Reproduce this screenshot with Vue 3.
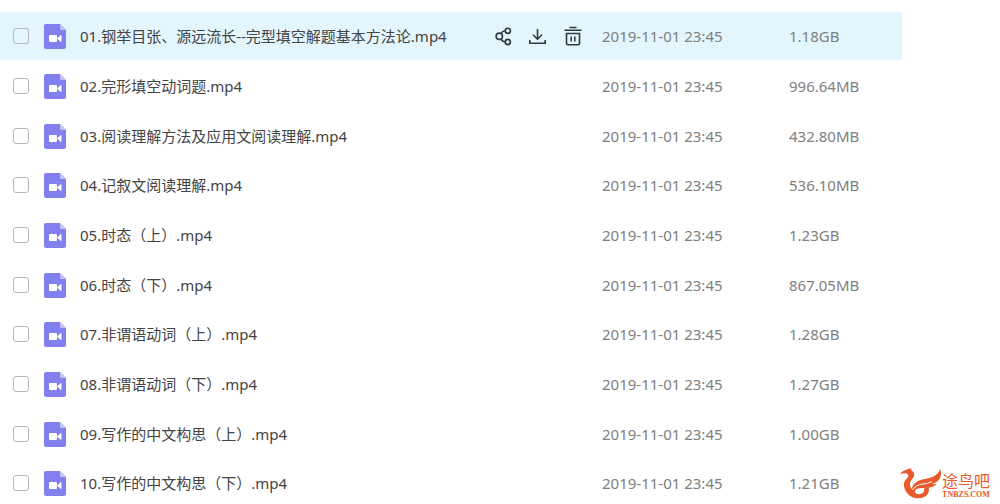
<script setup>
import { ref } from 'vue'

const date = '2019-11-01 23:45'
const files = ref([
  { name: '01.钢举目张、源远流长--完型填空解题基本方法论.mp4', size: '1.18GB', active: true },
  { name: '02.完形填空动词题.mp4', size: '996.64MB' },
  { name: '03.阅读理解方法及应用文阅读理解.mp4', size: '432.80MB' },
  { name: '04.记叙文阅读理解.mp4', size: '536.10MB' },
  { name: '05.时态（上）.mp4', size: '1.23GB' },
  { name: '06.时态（下）.mp4', size: '867.05MB' },
  { name: '07.非谓语动词（上）.mp4', size: '1.28GB' },
  { name: '08.非谓语动词（下）.mp4', size: '1.27GB' },
  { name: '09.写作的中文构思（上）.mp4', size: '1.00GB' },
  { name: '10.写作的中文构思（下）.mp4', size: '1.21GB' }
].map((f) => ({ ...f, date, checked: false })))
</script>

<template>
  <main class="page">
    <table class="files">
      <colgroup>
        <col class="c-check" />
        <col class="c-icon" />
        <col />
        <col class="c-actions" />
        <col class="c-date" />
        <col class="c-size" />
      </colgroup>
      <tbody>
        <tr v-for="(f, i) in files" :key="f.name" :class="{ active: f.active }">
          <td class="check"><input :id="'file' + i" v-model="f.checked" type="checkbox" /></td>
          <td>
            <svg class="file-icon" width="22" height="25" viewBox="0 0 22 25" aria-hidden="true">
              <path d="M2 0H16L22 6V23Q22 25 20 25H2Q0 25 0 23V2Q0 0 2 0Z" fill="#8180ee" />
              <path d="M16 0L22 6H17.500Q16 6 16 4.500Z" fill="#c5c4fa" />
              <rect x="5" y="11" width="8" height="7" rx="1" fill="#fff" />
              <path d="M13.500 14.500L17 11.500V17.500Z" fill="#fff" stroke="#fff" stroke-linejoin="round" />
            </svg>
          </td>
          <td class="name"><label :for="'file' + i">{{ f.name }}</label></td>
          <td>
            <div v-if="f.active" class="actions">
              <button type="button" aria-label="分享">
                <svg width="18" height="20" viewBox="0 0 18 20">
                  <circle cx="5.300" cy="10.300" r="3.200" />
                  <circle cx="13.800" cy="4.800" r="2.600" />
                  <circle cx="13.800" cy="16" r="2.600" />
                  <path d="M7 7.400Q8.800 4.800 11.200 4.800M7 13.200Q8.800 16 11.200 16" />
                </svg>
              </button>
              <button type="button" aria-label="下载">
                <svg width="18" height="20" viewBox="0 0 18 20">
                  <path d="M8.500 3V13M4 8.800L8.500 13.200L13 8.800M.8 14V17.200H16.200V14" />
                </svg>
              </button>
              <button type="button" aria-label="删除">
                <svg width="18" height="20" viewBox="0 0 18 20">
                  <path d="M.5 4.200H17.500M5.500 1.500H12.500M2.500 7.500V17Q2.500 18.700 4.200 18.700H13.800Q15.500 18.700 15.500 17V7.500ZM7.200 10.500V15.500M10.800 10.500V15.500" />
                </svg>
              </button>
            </div>
          </td>
          <td class="meta">{{ f.date }}</td>
          <td class="meta">{{ f.size }}</td>
        </tr>
      </tbody>
    </table>

    <div class="brand">
      <svg width="42" height="31" viewBox="0 0 42 31" aria-hidden="true">
        <path
          d="M0 6.500Q2 2.500 6 2Q8 0 12 .5Q10.500 1.200 11.500 2.500Q15 4 14 8C13 11 9.500 13 10 17C10.200 19 11 20 12 21C12.500 15 18 12 25 11C32 10 38 7 40.500 1C42.500 9 39 14 31.500 16Q34 16.500 37 15.500C34 19.500 28 20 23 20C18 20 15 21 15 23.500C15 26 19 27 22 25.500C24 24.500 24.500 23 24 20.500L28.500 19.500C30 24 27.500 28.500 22 29.800C15 31.500 9 28.500 6 23.500C3.500 19.500 3 15 5.500 12C7.500 9.500 9 8.500 8 6.500C6.500 4.500 3 5 0 6.500Z"
          fill="#e8592b"
        />
        <path d="M12.500 22Q16 16.500 23 16Q28 15.800 32 13.500" fill="none" stroke="#fff" />
      </svg>
      <div class="brand-text">
        <span class="brand-name">途鸟吧</span>
        <span class="brand-url">TNBZS.COM</span>
      </div>
    </div>
  </main>
</template>

<style>
body {
  margin: 0;
  background: #fff;
}
</style>

<style scoped>
.page {
  box-sizing: border-box;
  height: 100vh;
  overflow: hidden;
  padding: 12px 98px 0 0;
  font-family: "Noto Sans", "Noto Sans CJK SC", sans-serif;
  font-size: 15px;
  line-height: 20px;
  color: #444;
}
.files {
  width: 100%;
  table-layout: fixed;
  border-collapse: separate;
  border-spacing: 0;
}
.c-check { width: 44px; }
.c-icon { width: 36px; }
.c-actions { width: 108px; }
.c-date { width: 187px; }
.c-size { width: 113px; }
td {
  height: 48px;
  padding: 0;
  border-bottom: 2px solid transparent;
  background-clip: padding-box;
  vertical-align: middle;
  white-space: nowrap;
}
tr:nth-child(3n) td {
  border-bottom-width: 1px;
}
.active td {
  background-color: #e3f5fd;
}
.active td:last-child {
  border-radius: 0 2px 2px 0;
}
.check {
  padding-left: 13px;
}
input {
  display: block;
  appearance: none;
  box-sizing: border-box;
  width: 16px;
  height: 16px;
  margin: 0;
  border: 1px solid #b4b8bb;
  border-radius: 3px;
}
input:checked {
  background: #8180ee;
}
.file-icon {
  display: block;
}
.meta {
  color: #808080;
}
.actions {
  display: flex;
  gap: 17px;
}
button {
  display: block;
  padding: 0;
  border: 0;
  background: none;
  cursor: pointer;
}
button svg {
  display: block;
  fill: none;
  stroke: #303a46;
  stroke-width: 1.6;
}
.brand {
  position: absolute;
  right: 10px;
  bottom: 5px;
  display: flex;
  align-items: flex-end;
  color: #e8592b;
}
.brand-text {
  display: flex;
  flex-direction: column;
  align-items: center;
}
.brand-name {
  font-family: "Liberation Sans", "Noto Sans CJK SC", sans-serif;
  font-size: 16px;
  line-height: 18px;
}
.brand-url {
  font: bold 8px/8px "Liberation Serif", serif;
}
</style>
